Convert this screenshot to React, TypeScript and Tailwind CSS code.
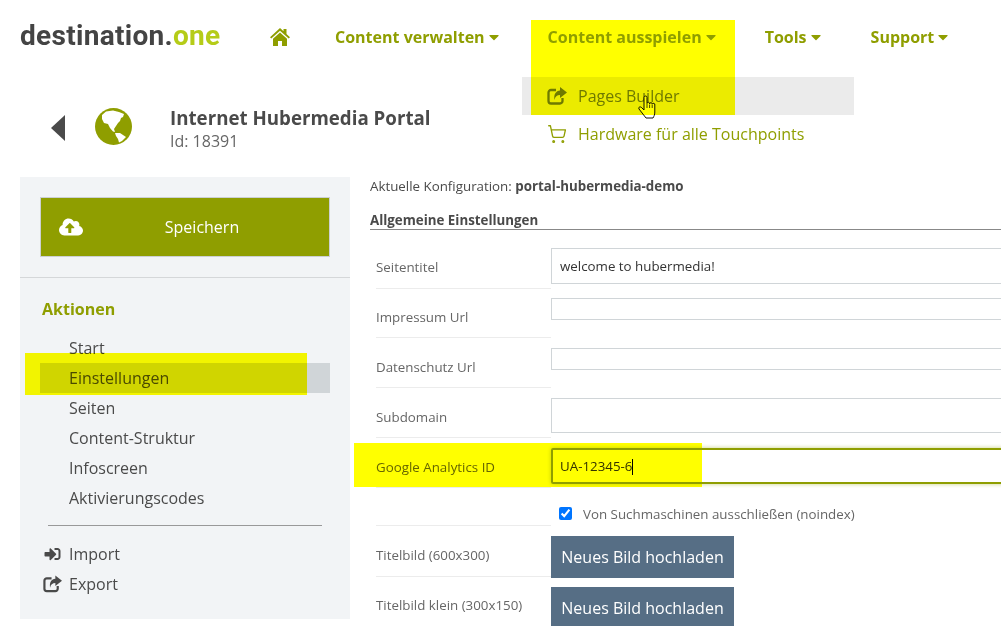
import React from 'react';
import { FaCaretDown, FaCloudUploadAlt, FaSignInAlt } from 'react-icons/fa';
import { ShoppingCart } from 'lucide-react';

const navItems = [
    { label: 'Content verwalten', left: 'ml-[45px]' },
    { label: 'Content ausspielen', left: 'ml-[49px]' },
    { label: 'Tools', left: 'ml-[49px]' },
    { label: 'Support', left: 'ml-[50px]' },
];

const sideItems = ['Start', 'Einstellungen', 'Seiten', 'Content-Struktur', 'Infoscreen', 'Aktivierungscodes'];

function ShareIcon({ className }: { className: string }) {
    return (
        <svg viewBox="0 0 20 18" className={className}>
            <path d="M9 3H4a2.5 2.5 0 0 0-2.5 2.5V14A2.5 2.5 0 0 0 4 16.500H13a2.500 2.500 0 0 0 2.500-2.500V11" fill="none" stroke="currentColor" strokeWidth="2.300" />
            <path d="M13 0L20 5.500L13 11V8C10 8 8 9.500 7.500 13C6.500 7 9 4 13 3.500Z" fill="currentColor" />
        </svg>
    );
}

function HomeIcon({ className }: { className: string }) {
    return (
        <svg viewBox="0 0 20 18" className={className} fill="currentColor">
            <path d="M10 0L13.500 3.200V1H16.500V6L20 9.200L18.700 10.500L10 2.800L1.300 10.500L0 9.200Z" />
            <path d="M3 10.800L10 4.600L17 10.800V18H12V13H8V18H3Z" />
        </svg>
    );
}

function GlobeIcon({ className }: { className: string }) {
    return (
        <svg viewBox="0 0 37 37" className={className}>
            <circle cx="18.500" cy="18.500" r="18.500" fill="#8f9e00" />
            <path d="M7 7L11 3.500L18 2.500L24 4L29 6L28 9L26 10L25 13L23 15L21 18L19 21L20 24L18 23.500L15 20L13 16L9 15L7 11Z" fill="#fff" />
            <path d="M20 25L25 25L31 29L27 33L24 34.500L23 31L21 28Z" fill="#fff" />
        </svg>
    );
}

function HandCursor() {
    return (
        <svg viewBox="0 0 18 24" className="absolute left-[638px] top-[95px] w-[18px] h-[24px]">
            <path d="M6 2.500a1.500 1.500 0 0 1 3 0V8.500a1.300 1.300 0 0 1 2.600 0.300a1.300 1.300 0 0 1 2.600 0.500a1.300 1.300 0 0 1 2.600 0.700V17C16.800 20 16 21 15 23H8L1 14C0 12 2.500 11 4 13L6 15Z" fill="#fff" stroke="#111" strokeWidth="1" />
            <path d="M9 9V13M11.600 9.500V13M14.200 10V13" fill="none" stroke="#111" strokeWidth="0.800" />
        </svg>
    );
}

function FormRow({ label, height, children, labelTop }: { label?: string; height: string; children?: React.ReactNode; labelTop: string }) {
    return (
        <div className={`flex ${height}`}>
            <div className={`w-[175px] ml-[6px] shrink-0 border-b border-[#ececec] text-[13.33px] text-[#666] ${labelTop}`}>{label}</div>
            <div className="flex-1">{children}</div>
        </div>
    );
}

export default function App() {
    return (
        <div className="relative w-[1001px] h-[626px] overflow-hidden bg-white font-['Open_Sans',sans-serif] text-[#4a4a4a]">
            {/* Top nav */}
            <div className="flex items-center h-[74px] pl-[20px]">
                <div className="w-[200px] mb-[2px] font-['Roboto',sans-serif] font-bold text-[28px] tracking-[0.3px] leading-none text-[#444] whitespace-nowrap">
                    destination.<span className="text-[#b5cc18]">one</span>
                </div>
                <HomeIcon className="ml-[50px] w-[20px] h-[18px] text-[#8f9e00]" />
                {navItems.map((n) => (
                    <div key={n.label} className={`${n.left} flex items-center gap-[4px] text-[16px] font-bold text-[#8f9e00] whitespace-nowrap`}>
                        {n.label}
                        <FaCaretDown className="w-[10px] h-[16px]" />
                    </div>
                ))}
            </div>

            {/* Dropdown */}
            <div className="absolute left-[522px] top-[77px] w-[332px] text-[16px] text-[#8f9e00]">
                <div className="flex items-center h-[38px] bg-[#ebebeb] pl-[25px] gap-[11px] text-[#6f7a00]">
                    <ShareIcon className="w-[20px] h-[18px]" />
                    Pages Builder
                </div>
                <div className="flex items-center h-[38px] pl-[25px] gap-[11px]">
                    <ShoppingCart className="w-[20px] h-[20px]" strokeWidth={1.6} />
                    Hardware für alle Touchpoints
                </div>
            </div>

            {/* Title */}
            <div className="flex h-[103px] pl-[51px] pt-[31px]">
                <div className="w-0 h-0 mt-[10px] border-y-[13px] border-y-transparent border-r-[14px] border-r-[#4a4a4a]" />
                <GlobeIcon className="ml-[30px] mt-[3px] w-[37px] h-[37px]" />
                <div className="ml-[38px]">
                    <div className="text-[18.72px] font-bold leading-[26px]">Internet Hubermedia Portal</div>
                    <div className="text-[16px] leading-[20px] text-[#666]">Id: 18391</div>
                </div>
            </div>

            <div className="flex pl-[20px]">
                {/* Sidebar */}
                <div className="w-[330px] h-[442px] shrink-0 bg-[#f2f4f6]">
                    <div className="px-[20px] pt-[20px] pb-[20px] border-b border-[#d5d7d9]">
                        <div className="relative flex items-center justify-center h-[60px] pl-[34px] bg-[#8f9e00] border border-[#ccd0d3] text-white text-[16px]">
                            <FaCloudUploadAlt className="absolute left-[18px] top-[17px] w-[24px] h-[24px]" />
                            Speichern
                        </div>
                    </div>
                    <div className="pl-[22px] pt-[19px] text-[16px] font-bold leading-[24px] text-[#8f9e00]">Aktionen</div>
                    <div className="mt-[12px] mx-[20px]">
                        {sideItems.map((s) => (
                            <div key={s} className={`h-[30px] leading-[30px] pl-[29px] text-[16px] ${s === 'Einstellungen' ? 'bg-[#d0d5d8]' : ''}`}>{s}</div>
                        ))}
                    </div>
                    <div className="mx-[28px] mt-[12px] border-t border-[#999]" />
                    <div className="mt-[13px] ml-[23px] text-[16px]">
                        <div className="flex items-center h-[30px] gap-[7px]">
                            <FaSignInAlt className="w-[19px] h-[16px]" />
                            Import
                        </div>
                        <div className="flex items-center h-[30px] gap-[7px]">
                            <ShareIcon className="w-[19px] h-[18px]" />
                            Export
                        </div>
                    </div>
                </div>

                {/* Main form */}
                <div className="ml-[20px] w-[720px] shrink-0">
                    <div className="text-[13.33px] leading-[18px]">Aktuelle Konfiguration: <b>portal-hubermedia-demo</b></div>
                    <div className="mt-[16px] text-[13.33px] font-bold leading-[18px] border-b border-[#888] pb-0">Allgemeine Einstellungen</div>
                    <div className="pt-[18px]">
                        <FormRow label="Seitentitel" height="h-[50px]" labelTop="pt-[10px] h-[41px]">
                            <input readOnly value="welcome to hubermedia!" className="w-full h-[36px] block border border-[#d0d5d8] px-[8px] text-[13.33px] text-[#333] outline-none" />
                        </FormRow>
                        <FormRow label="Impressum Url" height="h-[50px]" labelTop="pt-[10px] h-[40px]">
                            <input readOnly className="w-full h-[22px] block border border-[#d0d5d8]" />
                        </FormRow>
                        <FormRow label="Datenschutz Url" height="h-[50px]" labelTop="pt-[10px] h-[40px]">
                            <input readOnly className="w-full h-[22px] block border border-[#d0d5d8]" />
                        </FormRow>
                        <FormRow label="Subdomain" height="h-[50px]" labelTop="pt-[10px] h-[40px]">
                            <input readOnly className="w-full h-[35px] block border border-[#d0d5d8]" />
                        </FormRow>
                        <FormRow label="Google Analytics ID" height="h-[40px]" labelTop="pt-[10px] h-[40px]">
                            <div className="flex items-center h-[36px] border-2 border-[#8f9e00] rounded-[2px] shadow-[0_0_4px_#c8d080] pl-[7px] pt-[1px] text-[13.33px] text-[#333]">
                                UA-12345-6<span className="inline-block w-px h-[16px] bg-black" />
                            </div>
                        </FormRow>
                        <FormRow height="h-[48px]" labelTop="h-[38px]">
                            <div className="flex items-center h-[38px] pl-[8px] pt-[12px] text-[13.33px] text-[#666]">
                                <input type="checkbox" readOnly checked className="w-[13px] h-[13px] accent-[#0075ff]" />
                                <span className="ml-[11px] pt-[4px]">Von Suchmaschinen ausschließen (noindex)</span>
                            </div>
                        </FormRow>
                        <FormRow label="Titelbild (600x300)" height="h-[51px]" labelTop="pt-[10px] h-[41px]">
                            <div className="flex items-center justify-center w-[183px] h-[42px] bg-[#566e85] text-white text-[16px]">Neues Bild hochladen</div>
                        </FormRow>
                        <FormRow label="Titelbild klein (300x150)" height="h-[39px]" labelTop="pt-[9px] h-[39px] border-b-0">
                            <div className="flex items-center justify-center w-[183px] h-[39px] pt-[3px] bg-[#566e85] text-white text-[16px]">Neues Bild hochladen</div>
                        </FormRow>
                    </div>
                </div>
            </div>

            {/* Mouse cursor, under the highlighter marks as in the picture */}
            <HandCursor />

            {/* Highlighter marks over the page */}
            <div className="absolute left-[531px] top-[20px] w-[204px] h-[95px] bg-[#ffff00] mix-blend-multiply" />
            <div className="absolute left-[25px] top-[353px] w-[282px] h-[42px] bg-[#ffff00] mix-blend-multiply" />
            <div className="absolute left-[354px] top-[443px] w-[348px] h-[44px] bg-[#ffff00] mix-blend-multiply" />
        </div>
    );
}
